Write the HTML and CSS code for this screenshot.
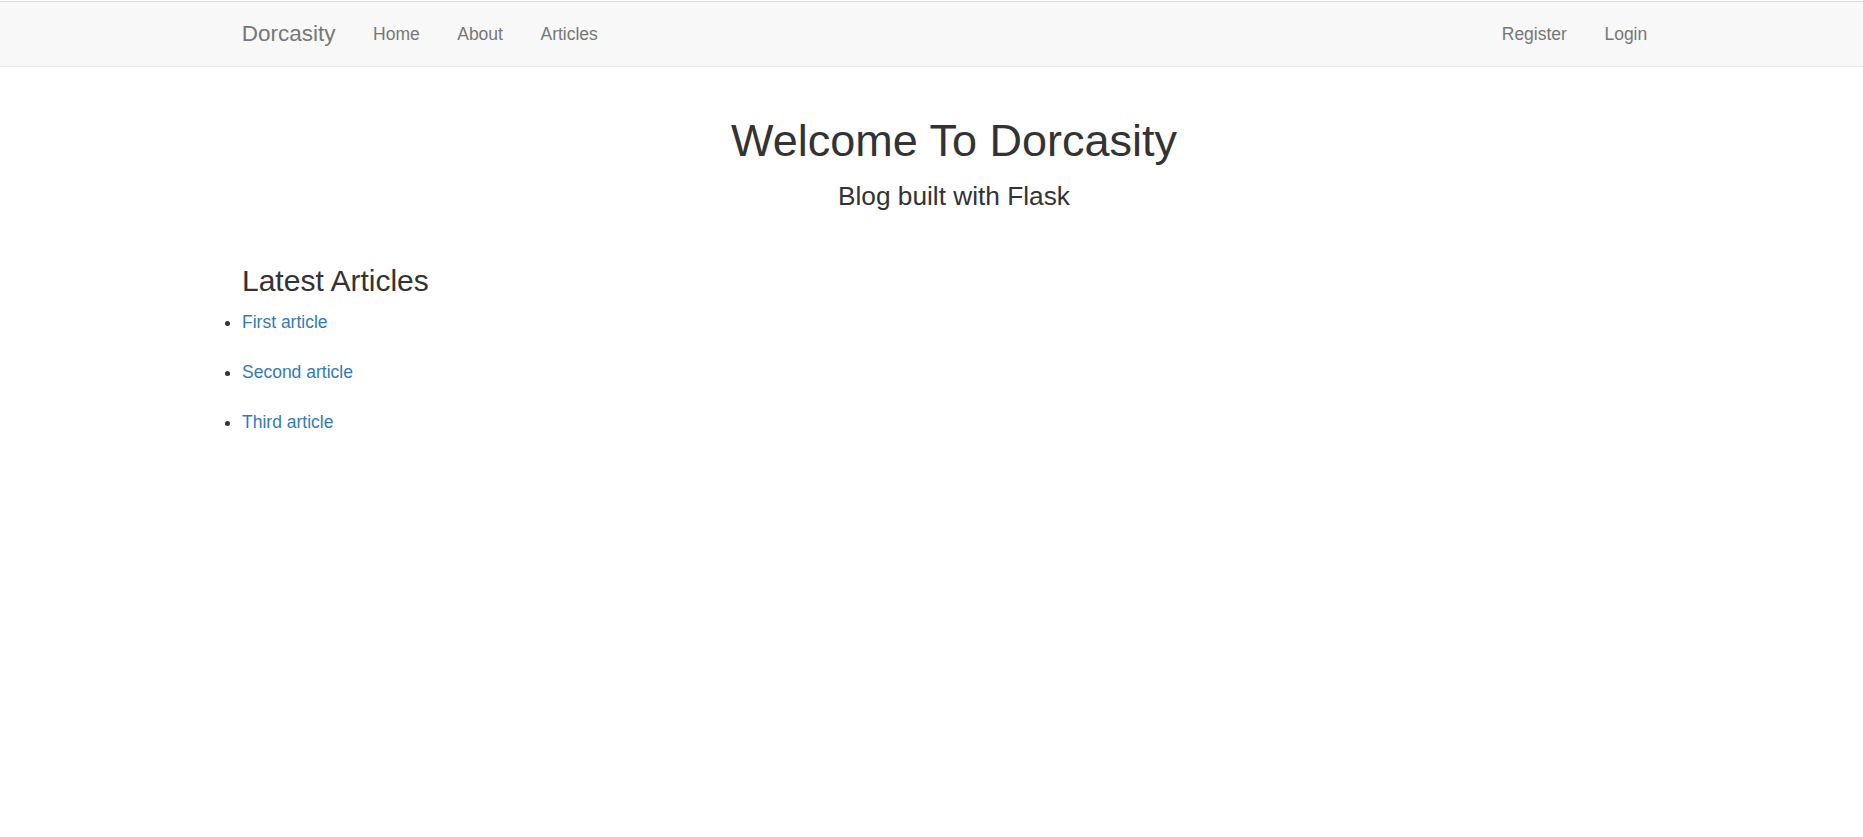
FILE: index.html
```html
<!DOCTYPE html>
<html lang="en">
<head>
<meta charset="utf-8">
<title>Dorcasity</title>
<link rel="stylesheet" href="styles.css">
</head>
<body>
<nav class="navbar">
  <div class="container navbar-inner">
    <a class="brand" href="#">Dorcasity</a>
    <ul class="nav">
      <li><a href="#">Home</a></li>
      <li><a href="#">About</a></li>
      <li><a href="#">Articles</a></li>
    </ul>
    <ul class="nav nav-right">
      <li><a href="#">Register</a></li>
      <li><a href="#">Login</a></li>
    </ul>
  </div>
</nav>
<main class="container main">
  <section class="jumbo">
    <h1 class="title">Welcome To Dorcasity</h1>
    <p class="lead">Blog built with Flask</p>
  </section>
  <h3 class="section-title">Latest Articles</h3>
  <ul class="articles">
    <li><a href="#">First article</a></li>
    <li><a href="#">Second article</a></li>
    <li><a href="#">Third article</a></li>
  </ul>
</main>
</body>
</html>
```
FILE: styles.css
```css
html, body {
  margin: 0;
  padding: 0;
  background: #fff;
}
body {
  font-family: "Liberation Sans", Arial, Helvetica, sans-serif;
  font-size: 17.5px;
  line-height: 25px;
  color: #333;
}
a {
  text-decoration: none;
}
.container {
  width: 1443px;
  margin-left: 223px;
  box-sizing: border-box;
}
.navbar {
  margin-top: 1px;
  background: #f8f8f8;
  border-top: 1px solid #dadada;
  border-bottom: 1px solid #e7e7e7;
}
.navbar-inner {
  display: flex;
  align-items: center;
  height: 64px;
}
.brand {
  font-size: 22.5px;
  line-height: 64px;
  padding: 0 18.75px;
  color: #777;
}
.nav {
  display: flex;
  list-style: none;
  margin: 0;
  padding: 0;
}
.nav a {
  display: block;
  padding: 0 18.75px;
  line-height: 64px;
  color: #777;
}
.nav-right {
  margin-left: auto;
}
.main {
  padding-left: 19px;
}
.jumbo {
  text-align: center;
  padding-top: 49px;
}
.title {
  margin: 0;
  font-size: 45px;
  line-height: 49.5px;
  font-weight: 400;
  color: #333;
}
.lead {
  margin: 12px 0 0;
  font-size: 26.25px;
  line-height: 36.5px;
  font-weight: 300;
}
.section-title {
  margin: 50px 0 0;
  font-size: 30px;
  line-height: 33px;
  font-weight: 400;
}
.articles {
  margin: 13px 0 0;
  padding: 0;
}
.articles li {
  margin-bottom: 25px;
}
.articles a {
  color: #337ab7;
}
```
